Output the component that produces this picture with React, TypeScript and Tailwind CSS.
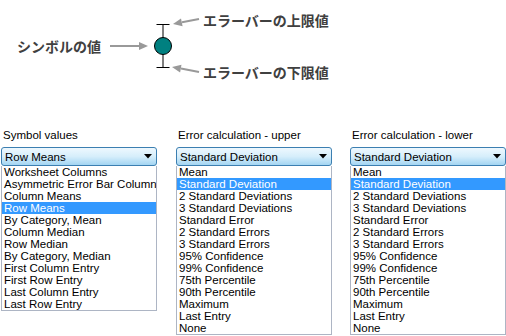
import React from "react";

const jp = { fontFamily: '"Noto Sans CJK JP", "Noto Sans", sans-serif' };
const ui = { fontFamily: '"Liberation Sans", Arial, sans-serif' };

function Select({
  label,
  value,
  items,
  selected,
  className,
}: {
  label: string;
  value: string;
  items: string[];
  selected: number;
  className: string;
}) {
  return (
    <div className={`flex w-[156px] flex-col ${className}`} style={ui}>
      <div className="h-[19px] pl-[2px] text-[11.5px] leading-[14px] text-black whitespace-nowrap">{label}</div>
      <div className="flex h-[19px] items-center justify-between rounded-[3px] border border-[#3c7fb1] bg-linear-to-b from-[#eef8fe] via-[#d6eefb] to-[#a3d5f2] pl-[3px] pr-[4px]">
        <span className="text-[11.5px] leading-[14px] text-black whitespace-nowrap">{value}</span>
        <svg width="8" height="5" viewBox="0 0 8 5">
          <polygon points="0,0 8,0 4,4.5" fill="#000" />
        </svg>
      </div>
      <div className="flex flex-col overflow-hidden border-x border-b border-[#adb5c4]">
        {items.map((it, i) => (
          <div
            key={it}
            className={`h-[12px] overflow-hidden whitespace-nowrap pl-[2px] text-[11.5px] leading-[12px] ${
              i === selected ? "bg-[#3399ff] text-white" : "text-black"
            }`}
          >
            {it}
          </div>
        ))}
      </div>
    </div>
  );
}

export default function App() {
  const symbolItems = [
    "Worksheet Columns",
    "Asymmetric Error Bar Column",
    "Column Means",
    "Row Means",
    "By Category, Mean",
    "Column Median",
    "Row Median",
    "By Category, Median",
    "First Column Entry",
    "First Row Entry",
    "Last Column Entry",
    "Last Row Entry",
  ];
  const errItems = [
    "Mean",
    "Standard Deviation",
    "2 Standard Deviations",
    "3 Standard Deviations",
    "Standard Error",
    "2 Standard Errors",
    "3 Standard Errors",
    "95% Confidence",
    "99% Confidence",
    "75th Percentile",
    "90th Percentile",
    "Maximum",
    "Last Entry",
    "None",
  ];
  return (
    <div className="h-[336px] w-[506px] overflow-hidden bg-white">
      <div className="flex h-[128px] items-start">
        <div className="flex h-[92px] w-[106px] items-center pl-[17px]">
          <span className="whitespace-nowrap text-[14px] font-bold leading-[16px] text-[#404040]" style={jp}>
            シンボルの値
          </span>
        </div>
        <svg width="97" height="92" viewBox="0 0 97 92">
          <line x1="4" y1="46" x2="34" y2="46" stroke="#999" strokeWidth="2" />
          <polygon points="42,46 33,42 33,50" fill="#999" />
          <line x1="93" y1="19" x2="76" y2="22.3" stroke="#999" strokeWidth="2" />
          <polygon points="67,24 76.6,26.2 75,18.4" fill="#999" />
          <line x1="93" y1="72" x2="75" y2="68.6" stroke="#999" strokeWidth="2" />
          <polygon points="66,67 75.5,64.7 74.1,72.5" fill="#999" />
          <line x1="57" y1="24" x2="57" y2="68" stroke="#000" strokeWidth="1" />
          <line x1="50.5" y1="24.5" x2="63.5" y2="24.5" stroke="#000" strokeWidth="1" />
          <line x1="50.5" y1="67.5" x2="63.5" y2="67.5" stroke="#000" strokeWidth="1" />
          <circle cx="57" cy="46" r="8.5" fill="#008080" stroke="#000" strokeWidth="1" />
        </svg>
        <div className="flex h-[92px] flex-col" style={jp}>
          <span className="mt-[12px] whitespace-nowrap text-[14px] font-bold leading-[16px] text-[#404040]">
            エラーバーの上限値
          </span>
          <span className="mt-[36px] whitespace-nowrap text-[14px] font-bold leading-[16px] text-[#404040]">
            エラーバーの下限値
          </span>
        </div>
      </div>
      <div className="flex items-start">
        <Select className="ml-[1px]" label="Symbol values" value="Row Means" items={symbolItems} selected={3} />
        <Select
          className="ml-[19px]"
          label="Error calculation - upper"
          value="Standard Deviation"
          items={errItems}
          selected={1}
        />
        <Select
          className="ml-[18px]"
          label="Error calculation - lower"
          value="Standard Deviation"
          items={errItems}
          selected={1}
        />
      </div>
    </div>
  );
}
